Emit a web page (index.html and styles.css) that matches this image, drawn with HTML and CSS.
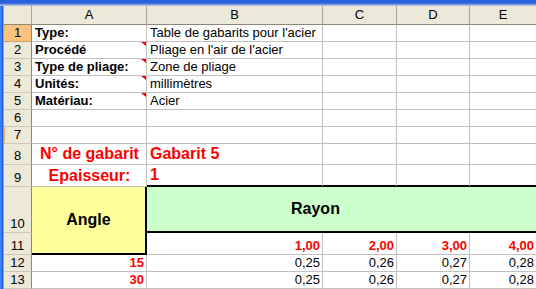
FILE: index.html
```html
<!DOCTYPE html>
<html lang="fr">
<head>
    <meta charset="UTF-8">
    <meta name="viewport" content="width=device-width, initial-scale=1.0">
    <title>Table de gabarits pour l'acier</title>
    <link rel="stylesheet" href="styles.css">
</head>
<body>

<div class="titlebar"></div>

<div class="frame">
    <div class="edge"></div>

    <div class="sheet">
        <!-- en-têtes de colonnes -->
        <div class="corner"></div>
        <div class="colhead">A</div>
        <div class="colhead">B</div>
        <div class="colhead">C</div>
        <div class="colhead">D</div>
        <div class="colhead">E</div>

        <!-- infos générales -->
        <div class="rowhead active">1</div>
        <div class="bold">Type:</div>
        <div>Table de gabarits pour l'acier</div>
        <div></div><div></div><div></div>

        <div class="rowhead">2</div>
        <div class="bold note">Procédé</div>
        <div>Pliage en l'air de l'acier</div>
        <div></div><div></div><div></div>

        <div class="rowhead">3</div>
        <div class="bold note">Type de pliage:</div>
        <div>Zone de pliage</div>
        <div></div><div></div><div></div>

        <div class="rowhead">4</div>
        <div class="bold note">Unités:</div>
        <div>millimètres</div>
        <div></div><div></div><div></div>

        <div class="rowhead">5</div>
        <div class="bold note">Matériau:</div>
        <div>Acier</div>
        <div></div><div></div><div></div>

        <div class="rowhead">6</div>
        <div></div><div></div><div></div><div></div><div></div>

        <div class="rowhead marked">7</div>
        <div></div><div></div><div></div><div></div><div></div>

        <!-- gabarit -->
        <div class="rowhead">8</div>
        <div class="big red center">N° de gabarit</div>
        <div class="big red">Gabarit 5</div>
        <div></div><div></div><div></div>

        <div class="rowhead">9</div>
        <div class="big red center">Epaisseur:</div>
        <div class="big red thick-bottom">1</div>
        <div class="thick-bottom"></div>
        <div class="thick-bottom"></div>
        <div class="thick-bottom"></div>

        <!-- tableau angle / rayon -->
        <div class="rowhead">10</div>
        <div class="angle">Angle</div>
        <div class="rayon">Rayon</div>

        <div class="rowhead">11</div>
        <div class="num red bold">1,00</div>
        <div class="num red bold">2,00</div>
        <div class="num red bold">3,00</div>
        <div class="num red bold">4,00</div>

        <div class="rowhead">12</div>
        <div class="num red bold">15</div>
        <div class="num">0,25</div>
        <div class="num">0,26</div>
        <div class="num">0,27</div>
        <div class="num">0,28</div>

        <div class="rowhead">13</div>
        <div class="num red bold">30</div>
        <div class="num">0,25</div>
        <div class="num">0,26</div>
        <div class="num">0,27</div>
        <div class="num">0,28</div>
    </div>
</div>

</body>
</html>
```

FILE: styles.css
```css
body {
    margin: 0;
    background: #ffffff;
    font-family: "Liberation Sans", Arial, sans-serif;
    font-size: 13px;
    color: #000000;
    overflow: hidden;
}
.titlebar {
    height: 6px;
    background: linear-gradient(to bottom, #2a62dc 0, #2a62dc 3px, #5b86e2 4px, #9aaed6 5px, #c4ccd8 6px);
}
.frame {
    display: flex;
}
.edge {
    width: 4px;
    flex-shrink: 0;
    background: linear-gradient(to right, #3a7ef6 0, #3a7ef6 2px, #1d59d6 2px, #1d59d6 3px, #8ea6d6 3px);
}
.sheet {
    display: grid;
    grid-template-columns: 28px 115px 176px 74px 73px 67px;
    grid-template-rows: 19px repeat(7, 17px) 21px 22px 46px 22px 17px 17px;
}
.sheet > div {
    box-sizing: border-box;
    position: relative;
    display: flex;
    align-items: flex-end;
    padding: 0 2px 1px 3px;
    line-height: 15px;
    white-space: nowrap;
    border-right: 1px solid #c0c0c0;
    border-bottom: 1px solid #c0c0c0;
}

/* en-têtes */
.sheet > .corner,
.sheet > .colhead,
.sheet > .rowhead {
    background: #ece9d8;
    justify-content: center;
    padding: 0 0 1px 0;
    border-right: 1px solid #aca899;
    border-bottom: 1px solid #aca899;
}
.sheet > .corner,
.sheet > .colhead {
    align-items: center;
    border-bottom-color: #8c8978;
}
.sheet > .rowhead {
    border-right-color: #8c8978;
    border-bottom-color: #cbc7b8;
}
.sheet > .rowhead.active {
    background: #f9c27e;
    border-bottom-color: #c9a070;
}
.sheet > .rowhead.marked {
    box-shadow: inset 1px 0 0 #f3b35a;
}

/* texte */
.bold {
    font-weight: bold;
}
.red {
    color: #ff0000;
}
.sheet > .big {
    font-size: 16px;
    font-weight: bold;
    line-height: 18px;
    padding-bottom: 1px;
}
.sheet > .center {
    justify-content: center;
}
.sheet > .num {
    justify-content: flex-end;
    padding-right: 2px;
}

/* indicateur de commentaire */
.note::after {
    content: "";
    position: absolute;
    top: 0;
    right: 0;
    width: 0;
    height: 0;
    border-top: 4px solid #ff0000;
    border-left: 5px solid transparent;
}

/* bloc angle / rayon */
.sheet > .thick-bottom {
    border-bottom: 2px solid #000000;
}
.sheet > .angle {
    grid-row: span 2;
    background: #ffff99;
    font-size: 16px;
    font-weight: bold;
    line-height: 18px;
    align-items: center;
    justify-content: center;
    padding: 0;
    border-right: 2px solid #000000;
    border-bottom: 2px solid #000000;
}
.sheet > .rayon {
    grid-column: span 4;
    background: #ccffcc;
    font-size: 16px;
    font-weight: bold;
    line-height: 18px;
    align-items: center;
    padding: 0 0 0 144px;
    border-right: none;
    border-bottom: 2px solid #000000;
}
```
